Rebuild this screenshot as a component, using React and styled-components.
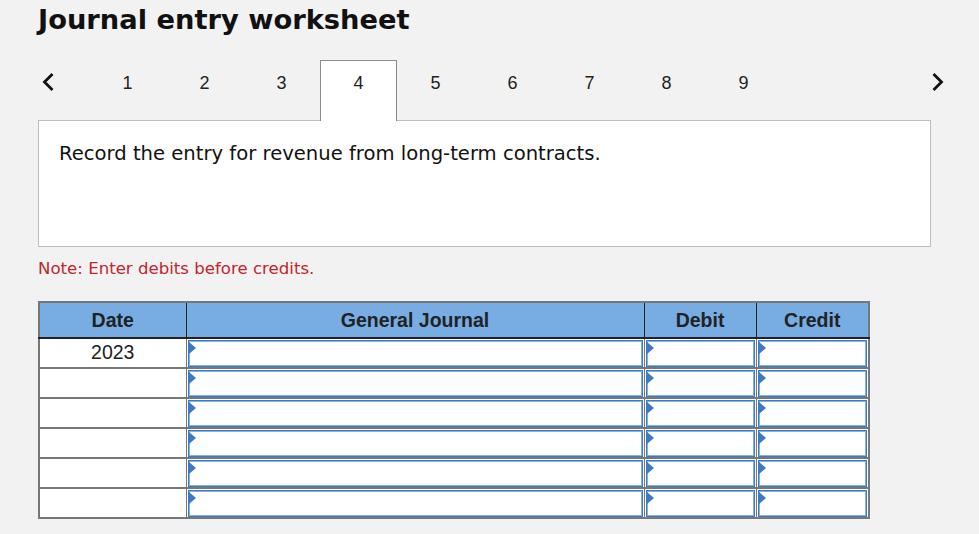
import React from "react";
import styled, { createGlobalStyle } from "styled-components";

const GlobalStyle = createGlobalStyle`
  html, body {
    margin: 0;
    padding: 0;
    background: #f2f2f2;
  }
`;

const tabs = [1, 2, 3, 4, 5, 6, 7, 8, 9];
const rows = ["2023", "", "", "", "", ""];

const App = () => {
  return (
    <Page>
      <GlobalStyle />
      <Title>Journal entry worksheet</Title>

      <TabBar>
        <Arrow>
          <svg width="16" height="22" viewBox="0 0 16 22">
            <path d="M12.5 3 L4.5 11 L12.5 19" fill="none" stroke="#111" strokeWidth="2.8" />
          </svg>
        </Arrow>
        {tabs.map((t) => (
          <Tab key={t} $active={t === 4}>
            {t}
          </Tab>
        ))}
        <Arrow $right>
          <svg width="16" height="22" viewBox="0 0 16 22">
            <path d="M3.5 3 L11.5 11 L3.5 19" fill="none" stroke="#111" strokeWidth="2.8" />
          </svg>
        </Arrow>
      </TabBar>

      <Panel>
        <p>Record the entry for revenue from long-term contracts.</p>
      </Panel>

      <Note>Note: Enter debits before credits.</Note>

      <Journal>
        <colgroup>
          <col style={{ width: 147 }} />
          <col style={{ width: 458 }} />
          <col style={{ width: 112 }} />
          <col style={{ width: 113 }} />
        </colgroup>
        <thead>
          <tr>
            <HeadCell>Date</HeadCell>
            <HeadCell>General Journal</HeadCell>
            <HeadCell>Debit</HeadCell>
            <HeadCell>Credit</HeadCell>
          </tr>
        </thead>
        <tbody>
          {rows.map((d, i) => (
            <tr key={i}>
              <DateCell>{d}</DateCell>
              <InputCell>
                <Field />
              </InputCell>
              <InputCell>
                <Field />
              </InputCell>
              <InputCell>
                <Field />
              </InputCell>
            </tr>
          ))}
        </tbody>
      </Journal>
    </Page>
  );
};

export default App;

const Page = styled.div`
  padding: 3px 0 0 38px;
  width: 941px;
  box-sizing: border-box;
`;

const Title = styled.h1`
  margin: 0;
  font-family: "DejaVu Sans", Verdana, sans-serif;
  font-weight: 700;
  font-size: 27.3px;
  line-height: 34px;
  color: #111;
`;

const TabBar = styled.div`
  display: flex;
  align-items: stretch;
  height: 60px;
  margin-top: 23px;
  width: 912px;
  position: relative;
  z-index: 1;
`;

const Arrow = styled.div`
  display: flex;
  align-items: center;
  justify-content: ${(p) => (p.$right ? "center" : "flex-start")};
  padding-left: ${(p) => (p.$right ? "0" : "2px")};
  margin-left: ${(p) => (p.$right ? "auto" : "0")};
  width: ${(p) => (p.$right ? "24px" : "51px")};
  padding-bottom: 16px;
  box-sizing: border-box;
`;

const Tab = styled.div`
  width: 77px;
  box-sizing: border-box;
  display: flex;
  align-items: center;
  justify-content: center;
  padding-bottom: 16px;
  height: 61px;
  font-family: "Liberation Sans", Arial, sans-serif;
  font-size: 18px;
  color: #222;
  background: ${(p) => (p.$active ? "#fff" : "transparent")};
  border: 1px solid ${(p) => (p.$active ? "#8c8c8c" : "transparent")};
  border-bottom: none;
`;

const Panel = styled.div`
  width: 893px;
  height: 127px;
  box-sizing: border-box;
  background: #fff;
  border: 1px solid #bdbdbd;
  padding: 21px 20px;

  p {
    margin: 0;
    font-family: "DejaVu Sans", Verdana, sans-serif;
    font-size: 19.6px;
    line-height: 24px;
    color: #111;
  }
`;

const Note = styled.div`
  margin-top: 12px;
  font-family: "DejaVu Sans", Verdana, sans-serif;
  font-size: 16.6px;
  line-height: 20px;
  color: #c0262d;
`;

const Journal = styled.table`
  margin-top: 22px;
  width: 831px;
  border-collapse: collapse;
  table-layout: fixed;
  border: 2px solid #777;
`;

const HeadCell = styled.th`
  height: 34px;
  padding: 0;
  background: #78ade4;
  font-family: "Liberation Sans", Arial, sans-serif;
  font-size: 19.5px;
  font-weight: 700;
  color: #222;
  border-left: 1px solid #222;
  border-bottom: 2px solid #222;
  text-align: center;

  &:first-child {
    border-left: 2px solid #777;
  }
`;

const DateCell = styled.td`
  height: 28px;
  padding: 0;
  background: #fff;
  border: 2px solid #777;
  border-right-width: 1px;
  font-family: "Liberation Sans", Arial, sans-serif;
  font-size: 19.5px;
  color: #222;
  text-align: center;
  vertical-align: top;
  line-height: 27px;
`;

const InputCell = styled.td`
  height: 28px;
  padding: 0 1px;
  background: #fff;
  border: 1px solid #777;
  border-top-width: 2px;
  border-bottom-width: 2px;
`;

const Field = styled.div`
  position: relative;
  height: 27px;
  box-sizing: border-box;
  background: #fff;
  border: 1px solid #3c7ac6;
  box-shadow: inset 0 0 0 1px #86b1e4;

  &::before {
    content: "";
    position: absolute;
    left: 0;
    top: 1px;
    border-style: solid;
    border-width: 6px 0 6px 7px;
    border-color: transparent transparent transparent #3c7ac6;
  }
`;
